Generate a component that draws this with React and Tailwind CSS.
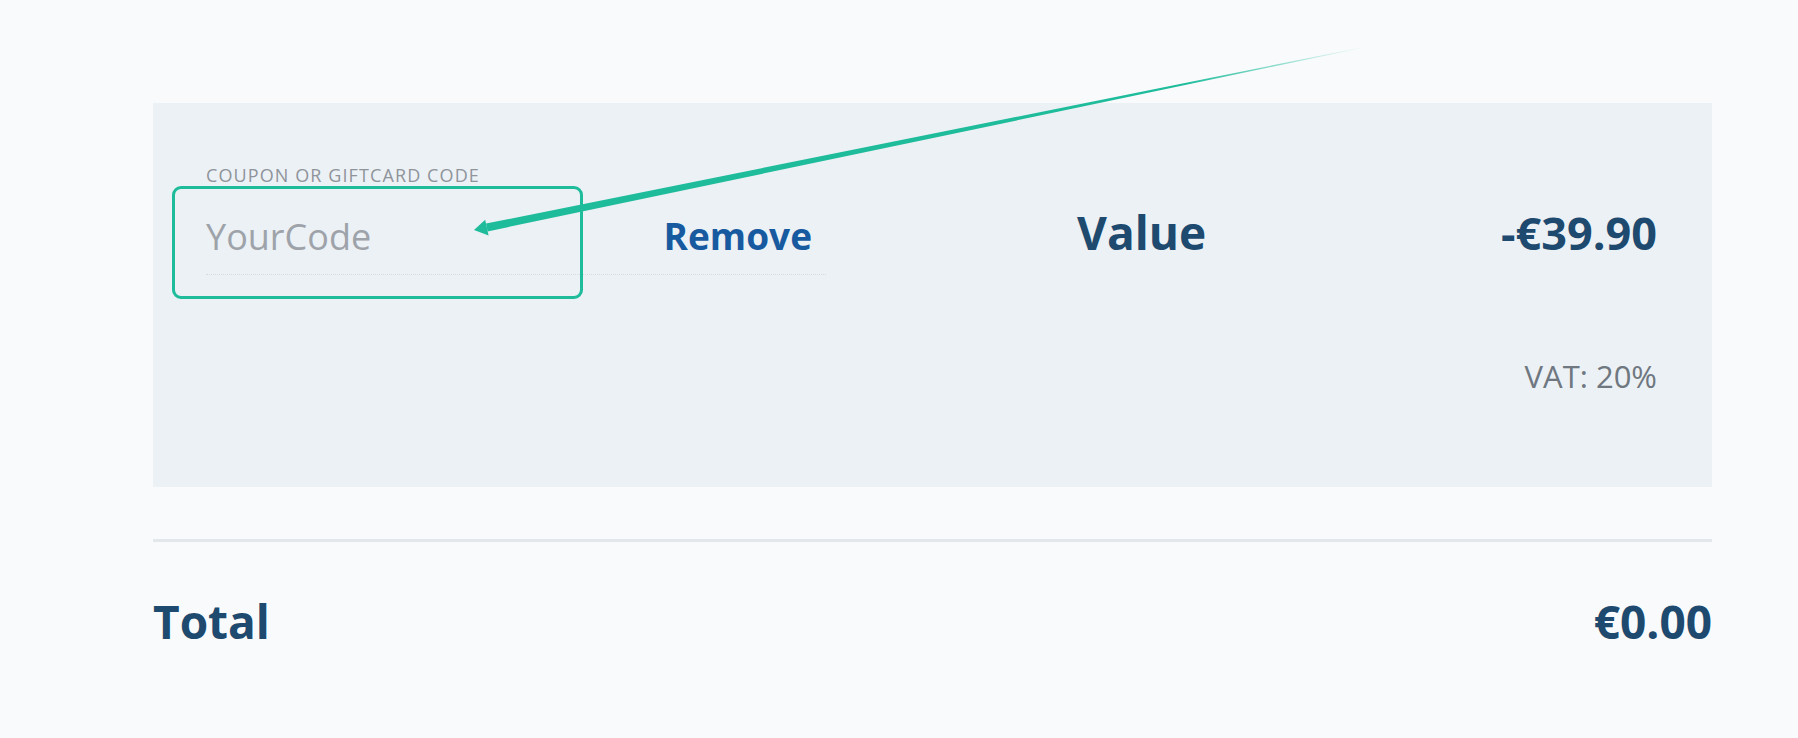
export default function App() {
  return (
    <div
      className="relative w-[1798px] h-[738px] bg-[#f8fafc] overflow-hidden"
      style={{ fontFamily: '"Open Sans", "Noto Sans", sans-serif' }}
    >
      <div className="pt-[103px] pl-[153px] w-[1712px]">
        {/* Coupon panel */}
        <div className="bg-[#ecf1f5] h-[384px] pl-[53px] pr-[55px] pt-[63px]">
          <div className="text-[18px] leading-none tracking-[1.1px] text-[#8f949b] uppercase">
            Coupon or giftcard code
          </div>
          <div className="flex items-baseline mt-[25px]">
            <div className="w-[620px] flex items-baseline justify-between border-b border-dotted border-[#d6dbe0] pb-[10px] pr-[14px]">
              <span className="text-[36px] text-[#9ea3aa]">YourCode</span>
              <span className="text-[37px] leading-none font-bold text-[#175aa0]">Remove</span>
            </div>
            <div className="ml-[251px] text-[46px] leading-none font-bold text-[#1d4a6e]">Value</div>
            <div className="ml-auto text-[45px] leading-none font-bold text-[#1d4a6e]">-€39.90</div>
          </div>
          <div className="mt-[86px] text-right text-[31px] leading-none text-[#6f7780]">VAT: 20%</div>
        </div>

        {/* Divider */}
        <div className="mt-[52px] h-[3px] bg-[#e3e7eb]" />

        {/* Total */}
        <div className="mt-[56px] flex items-baseline justify-between">
          <span className="text-[46px] leading-none font-bold text-[#1d4a6e]">Total</span>
          <span className="text-[46px] leading-none font-bold text-[#1d4a6e]">€0.00</span>
        </div>
      </div>

      {/* Highlight box */}
      <div className="absolute left-[172px] top-[186px] w-[411px] h-[113px] border-[3px] border-[#1ebc9b] rounded-[9px]" />

      {/* Arrow */}
      <svg className="absolute left-0 top-0 pointer-events-none" width="1798" height="738" viewBox="0 0 1798 738">
        <defs>
          <linearGradient id="arrowFade" gradientUnits="userSpaceOnUse" x1="475" y1="230" x2="1365" y2="47">
            <stop offset="0" stopColor="#1ebc9b" stopOpacity="1" />
            <stop offset="0.8" stopColor="#1ebc9b" stopOpacity="1" />
            <stop offset="1" stopColor="#1ebc9b" stopOpacity="0" />
          </linearGradient>
        </defs>
        <polygon points="487.6,231.4 486.0,223.6 1365.1,46.7 1365.3,47.3" fill="url(#arrowFade)" />
        <polygon points="474,230 485.2,219.8 488.6,235.6" fill="#1ebc9b" />
      </svg>
    </div>
  );
}
